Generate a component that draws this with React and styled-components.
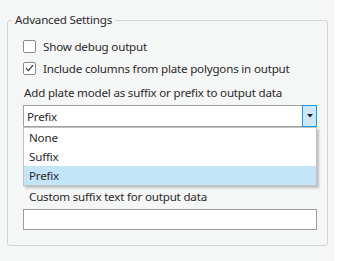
import React from 'react'
import styled, { createGlobalStyle } from 'styled-components'

const Global = createGlobalStyle`
body{
margin:0;
background:#ffffff;
font-family:"Noto Sans","Open Sans",sans-serif;
font-size:11.6px;
letter-spacing:-0.2px;
color:#2a2a2a;
}
`;
const Panel = styled.div`
width:334px;
height:261px;
box-sizing:border-box;
padding:12px 6px 0 7px;
background:#f5f6f6;
`;
const Group = styled.fieldset`
margin:0;
padding:0;
height:234px;
box-sizing:border-box;
border:1px solid #d3d4d4;
border-radius:3px;
`;
const Legend = styled.legend`
margin-left:4px;
padding:0 3px;
line-height:16px;
`;
const Body = styled.div`
position:relative;
padding:7px 10px 0 15px;
`;
const CheckRow = styled.label`
display:flex;
align-items:center;
gap:7px;
height:22px;
`;
const Box = styled.span`
width:13px;
height:13px;
box-sizing:border-box;
border:1px solid #8a8a8a;
border-radius:2px;
background:#fff;
display:flex;
align-items:center;
justify-content:center;
`;
const Label = styled.div`
line-height:16px;
padding-left:${p => p.$indent || 1}px;
margin-top:${p => p.$top || 0}px;
`;
const Combo = styled.div`
margin-top:4px;
height:22px;
box-sizing:border-box;
border:1px solid #a2a2a2;
background:#fff;
display:flex;
align-items:center;
`;
const ComboText = styled.span`
flex:1;
padding-left:3px;
`;
const ArrowBtn = styled.span`
width:15px;
height:22px;
margin:-1px -1px -1px 0;
box-sizing:border-box;
border:1px solid #1c98e3;
background:#cce7f8;
display:flex;
align-items:center;
justify-content:center;
`;
const List = styled.div`
position:absolute;
left:15px;
right:10px;
top:99px;
border:1px solid #c2c2c2;
background:#fff;
box-shadow:2px 2px 2px rgba(0,0,0,0.22);
`;
const Item = styled.div`
height:19px;
line-height:19px;
padding-left:5px;
background:${p => p.$active ? '#c4e4f7' : '#fff'};
`;
const TextBox = styled.div`
margin-top:4px;
height:21px;
box-sizing:border-box;
border:1px solid #9c9c9c;
background:#fff;
`;

function Check({ checked, children }) {
    return (
        <CheckRow>
            <Box>
                {checked && (
                    <svg width="9" height="8" viewBox="0 0 9 8">
                        <path d="M1 4.2 L3.4 6.6 L8 1.2" fill="none" stroke="#333" strokeWidth="1.2" />
                    </svg>
                )}
            </Box>
            {children}
        </CheckRow>
    );
}

function App() {
    return (
        <Panel>
            <Global />
            <Group>
                <Legend>Advanced Settings</Legend>
                <Body>
                    <Check>Show debug output</Check>
                    <Check checked>Include columns from plate polygons in output</Check>
                    <Label $top={6}>Add plate model as suffix or prefix to output data</Label>
                    <Combo>
                        <ComboText>Prefix</ComboText>
                        <ArrowBtn>
                            <svg width="6" height="4" viewBox="0 0 6 4">
                                <path d="M0 0 L6 0 L3 3.5 Z" fill="#222" />
                            </svg>
                        </ArrowBtn>
                    </Combo>
                    <Label $top={62} $indent={6}>Custom suffix text for output data</Label>
                    <TextBox />
                    <List>
                        <Item>None</Item>
                        <Item>Suffix</Item>
                        <Item $active>Prefix</Item>
                    </List>
                </Body>
            </Group>
        </Panel>
    );
}
export default App
